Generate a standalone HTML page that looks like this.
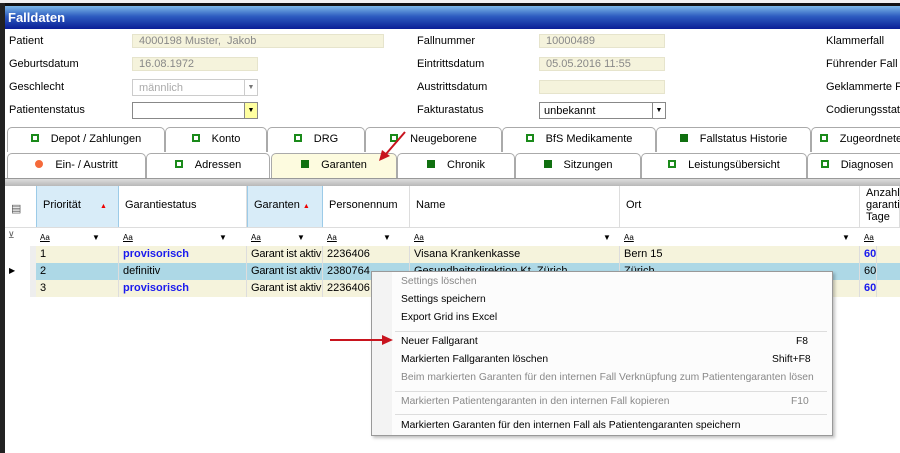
<!DOCTYPE html>
<html><head><meta charset="utf-8"><style>
*{margin:0;padding:0;box-sizing:border-box}
body{width:900px;height:453px;overflow:hidden;background:#fff;font-family:"Liberation Sans",sans-serif;font-size:11px;color:#000;position:relative}
.a{position:absolute;white-space:nowrap}
.inp{position:absolute;background:#f5f3dc;border:1px solid #e6e4cc;color:#888;padding:1px 6px;height:14px;line-height:11px}
.tab{position:absolute;border:1px solid #aaa;border-bottom:none;border-radius:5px 5px 0 0;background:#fff;text-align:center;line-height:23px;height:25px;font-size:11px;white-space:nowrap;overflow:hidden}
.sq{display:inline-block;width:8px;height:8px;border:2px solid #1a8a1a;margin-right:12px;vertical-align:-0px}
.sf{background:#107010;border-color:#107010}
.hd{position:absolute;top:186px;height:42px;border-right:1px solid #ddd;padding:13px 0 0 6px;white-space:nowrap;overflow:hidden}
.hl{background:#d8ecf8;border-left:1px solid #9ccbe8;border-right:1px solid #9ccbe8}
.row{position:absolute;left:36px;width:864px;height:17px;line-height:16px;font-size:11px}
.c{position:absolute;top:0;height:17px;padding-left:4px;border-right:1px solid #ddd;white-space:nowrap;overflow:hidden}
.m{position:absolute;left:401px;font-family:"Liberation Sans",sans-serif;font-size:10.3px;white-space:nowrap}
.g{color:#888}
.sep{position:absolute;left:395px;width:432px;height:1px;background:#ddd}
.fa{position:absolute;top:228px;height:18px;font-size:8px;padding:5px 0 0 4px;text-decoration:underline}
</style></head><body>
<div class="a" style="left:0;top:0;width:900px;height:4px;background:#f0f0f0;border-bottom:1px solid #ccc"></div>
<div class="a" style="left:0;top:3px;width:900px;height:3px;background:#111"></div>
<div class="a" style="left:0;top:3px;width:5px;height:450px;background:#222"></div>
<div class="a" style="left:5px;top:6px;width:895px;height:23px;background:linear-gradient(#7cb8e8,#2d5cc0 45%,#0a1e96)"></div>
<div class="a" style="left:8px;top:10px;color:#fff;font-weight:bold;font-size:13px">Falldaten</div>

<div class="a" style="left:9px;top:35px">Patient</div>
<div class="a" style="left:9px;top:58px">Geburtsdatum</div>
<div class="a" style="left:9px;top:81px">Geschlecht</div>
<div class="a" style="left:9px;top:104px">Patientenstatus</div>
<div class="inp" style="left:132px;top:34px;width:252px">4000198 Muster,&nbsp; Jakob</div>
<div class="inp" style="left:132px;top:57px;width:126px">16.08.1972</div>
<div class="a" style="left:132px;top:79px;width:126px;height:17px;border:1px solid #ccc;color:#aaa;padding:2px 6px">männlich<span style="position:absolute;right:0;top:0;width:13px;height:15px;border-left:1px solid #ccc;text-align:center;font-size:7px;line-height:15px;color:#777">▼</span></div>
<div class="a" style="left:132px;top:102px;width:126px;height:17px;border:1px solid #888"><span style="position:absolute;right:0;top:0;width:13px;height:15px;background:#ffffa0;border-left:1px solid #888;text-align:center;font-size:7px;line-height:15px">▼</span></div>

<div class="a" style="left:417px;top:35px">Fallnummer</div>
<div class="a" style="left:417px;top:58px">Eintrittsdatum</div>
<div class="a" style="left:417px;top:81px">Austrittsdatum</div>
<div class="a" style="left:417px;top:104px">Fakturastatus</div>
<div class="inp" style="left:539px;top:34px;width:126px">10000489</div>
<div class="inp" style="left:539px;top:57px;width:126px">05.05.2016 11:55</div>
<div class="inp" style="left:539px;top:80px;width:126px"></div>
<div class="a" style="left:539px;top:102px;width:127px;height:17px;border:1px solid #888;padding:2px 4px">unbekannt<span style="position:absolute;right:0;top:0;width:13px;height:15px;border-left:1px solid #888;text-align:center;font-size:7px;line-height:15px">▼</span></div>

<div class="a" style="left:826px;top:35px">Klammerfall</div>
<div class="a" style="left:826px;top:58px">Führender Fall</div>
<div class="a" style="left:826px;top:81px">Geklammerte Fälle</div>
<div class="a" style="left:826px;top:104px">Codierungsstatus</div>

<div class="tab" style="left:7px;top:127px;width:158px"><span class="sq"></span>Depot / Zahlungen</div>
<div class="tab" style="left:165px;top:127px;width:102px"><span class="sq"></span>Konto</div>
<div class="tab" style="left:267px;top:127px;width:98px"><span class="sq"></span>DRG</div>
<div class="tab" style="left:365px;top:127px;width:137px"><span class="sq"></span>Neugeborene</div>
<div class="tab" style="left:502px;top:127px;width:154px"><span class="sq"></span>BfS Medikamente</div>
<div class="tab" style="left:656px;top:127px;width:155px"><span class="sq sf"></span>Fallstatus Historie</div>
<div class="tab" style="left:811px;top:127px;width:100px"><span class="sq"></span>Zugeordnete</div>

<div class="tab" style="left:7px;top:153px;width:139px"><span class="sq" style="border-radius:50%;background:#f56a3a;border-color:#f56a3a"></span>Ein- / Austritt</div>
<div class="tab" style="left:146px;top:153px;width:124px"><span class="sq"></span>Adressen</div>
<div class="tab" style="left:271px;top:153px;width:126px;background:#fdfbdf"><span class="sq sf"></span>Garanten</div>
<div class="tab" style="left:397px;top:153px;width:118px"><span class="sq sf"></span>Chronik</div>
<div class="tab" style="left:515px;top:153px;width:126px"><span class="sq sf"></span>Sitzungen</div>
<div class="tab" style="left:641px;top:153px;width:166px"><span class="sq"></span>Leistungsübersicht</div>
<div class="tab" style="left:807px;top:153px;width:100px"><span class="sq"></span>Diagnosen</div>
<div class="a" style="left:5px;top:178px;width:895px;height:8px;background:linear-gradient(#ddd,#b8b8b8);border-top:1px solid #999"></div>

<div class="a" style="left:11px;top:202px;font-size:11px;color:#555">▤</div>
<div class="a" style="left:8px;top:230px;font-size:9px;color:#555">⊻</div>
<div class="hd hl" style="left:36px;width:83px">Priorität <span style="color:#e00;font-size:7px;margin-left:16px">▲</span></div>
<div class="hd" style="left:119px;width:128px">Garantiestatus</div>
<div class="hd hl" style="left:247px;width:76px">Garanten <span style="color:#e00;font-size:7px">▲</span></div>
<div class="hd" style="left:323px;width:87px">Personennum</div>
<div class="hd" style="left:410px;width:210px">Name</div>
<div class="hd" style="left:620px;width:240px">Ort</div>
<div class="hd" style="left:860px;width:40px;padding-top:1px;line-height:12px;white-space:normal">Anzahl<br>garantie<br>Tage</div>
<div class="a" style="left:5px;top:227px;width:895px;height:1px;background:#ddd"></div>
<div class="fa" style="left:36px">Aa<span style="position:absolute;left:56px;text-decoration:none">▼</span></div>
<div class="fa" style="left:119px">Aa<span style="position:absolute;left:100px;text-decoration:none">▼</span></div>
<div class="fa" style="left:247px">Aa<span style="position:absolute;left:50px;text-decoration:none">▼</span></div>
<div class="fa" style="left:323px">Aa<span style="position:absolute;left:60px;text-decoration:none">▼</span></div>
<div class="fa" style="left:410px">Aa<span style="position:absolute;left:193px;text-decoration:none">▼</span></div>
<div class="fa" style="left:620px">Aa<span style="position:absolute;left:222px;text-decoration:none">▼</span></div>
<div class="fa" style="left:860px">Aa</div>
<div class="a" style="left:30px;top:246px;width:6px;height:51px;background:#eee"></div>
<div class="a" style="left:9px;top:266px;font-size:8px">▶</div>

<div class="row" style="top:246px;background:#f5f3dc"><div class="c" style="left:0;width:83px">1</div><div class="c" style="left:83px;width:128px;color:#1a1aee;font-weight:bold">provisorisch</div><div class="c" style="left:211px;width:76px;letter-spacing:-0.2px">Garant ist aktiv</div><div class="c" style="left:287px;width:87px">2236406</div><div class="c" style="left:374px;width:210px">Visana Krankenkasse</div><div class="c" style="left:584px;width:240px">Bern 15</div><div class="c" style="left:824px;color:#1a1aee;font-weight:bold">60</div></div>
<div class="row" style="top:263px;background:#add8e6"><div class="c" style="left:0;width:83px">2</div><div class="c" style="left:83px;width:128px">definitiv</div><div class="c" style="left:211px;width:76px;letter-spacing:-0.2px">Garant ist aktiv</div><div class="c" style="left:287px;width:87px">2380764</div><div class="c" style="left:374px;width:210px">Gesundheitsdirektion Kt. Zürich</div><div class="c" style="left:584px;width:240px">Zürich</div><div class="c" style="left:824px">60</div></div>
<div class="row" style="top:280px;background:#f5f3dc"><div class="c" style="left:0;width:83px">3</div><div class="c" style="left:83px;width:128px;color:#1a1aee;font-weight:bold">provisorisch</div><div class="c" style="left:211px;width:76px;letter-spacing:-0.2px">Garant ist aktiv</div><div class="c" style="left:287px;width:87px">2236406</div><div class="c" style="left:374px;width:210px"></div><div class="c" style="left:584px;width:240px"></div><div class="c" style="left:824px;color:#1a1aee;font-weight:bold">60</div></div>

<div class="a" style="left:371px;top:271px;width:462px;height:165px;background:#fcfcfc;border:1px solid #999;box-shadow:2px 2px 3px rgba(0,0,0,.25)"></div>
<div class="a" style="left:372px;top:272px;width:20px;height:163px;background:#f3f3f3"></div>
<div class="m g" style="top:276px">Settings löschen</div>
<div class="m" style="top:294px">Settings speichern</div>
<div class="m" style="top:312px">Export Grid ins Excel</div>
<div class="sep" style="top:331px"></div>
<div class="m" style="top:336px">Neuer Fallgarant</div><div class="m" style="top:336px;left:796px">F8</div>
<div class="m" style="top:354px">Markierten Fallgaranten löschen</div><div class="m" style="top:354px;left:772px">Shift+F8</div>
<div class="m g" style="top:372px">Beim markierten Garanten für den internen Fall Verknüpfung zum Patientengaranten lösen</div>
<div class="sep" style="top:391px"></div>
<div class="m g" style="top:396px">Markierten Patientengaranten in den internen Fall kopieren</div><div class="m g" style="top:396px;left:791px">F10</div>
<div class="sep" style="top:414px"></div>
<div class="m" style="top:420px">Markierten Garanten für den internen Fall als Patientengaranten speichern</div>

<svg class="a" style="left:0;top:0" width="900" height="453">
<line x1="330" y1="340" x2="385" y2="340" stroke="#c8141e" stroke-width="2"/>
<polygon points="382,335 393,340 382,345" fill="#c8141e"/>
<line x1="405" y1="132" x2="386" y2="154" stroke="#c8141e" stroke-width="2"/>
<polygon points="379,161 382,150 390,156" fill="#c8141e"/>
</svg>
</body></html>
